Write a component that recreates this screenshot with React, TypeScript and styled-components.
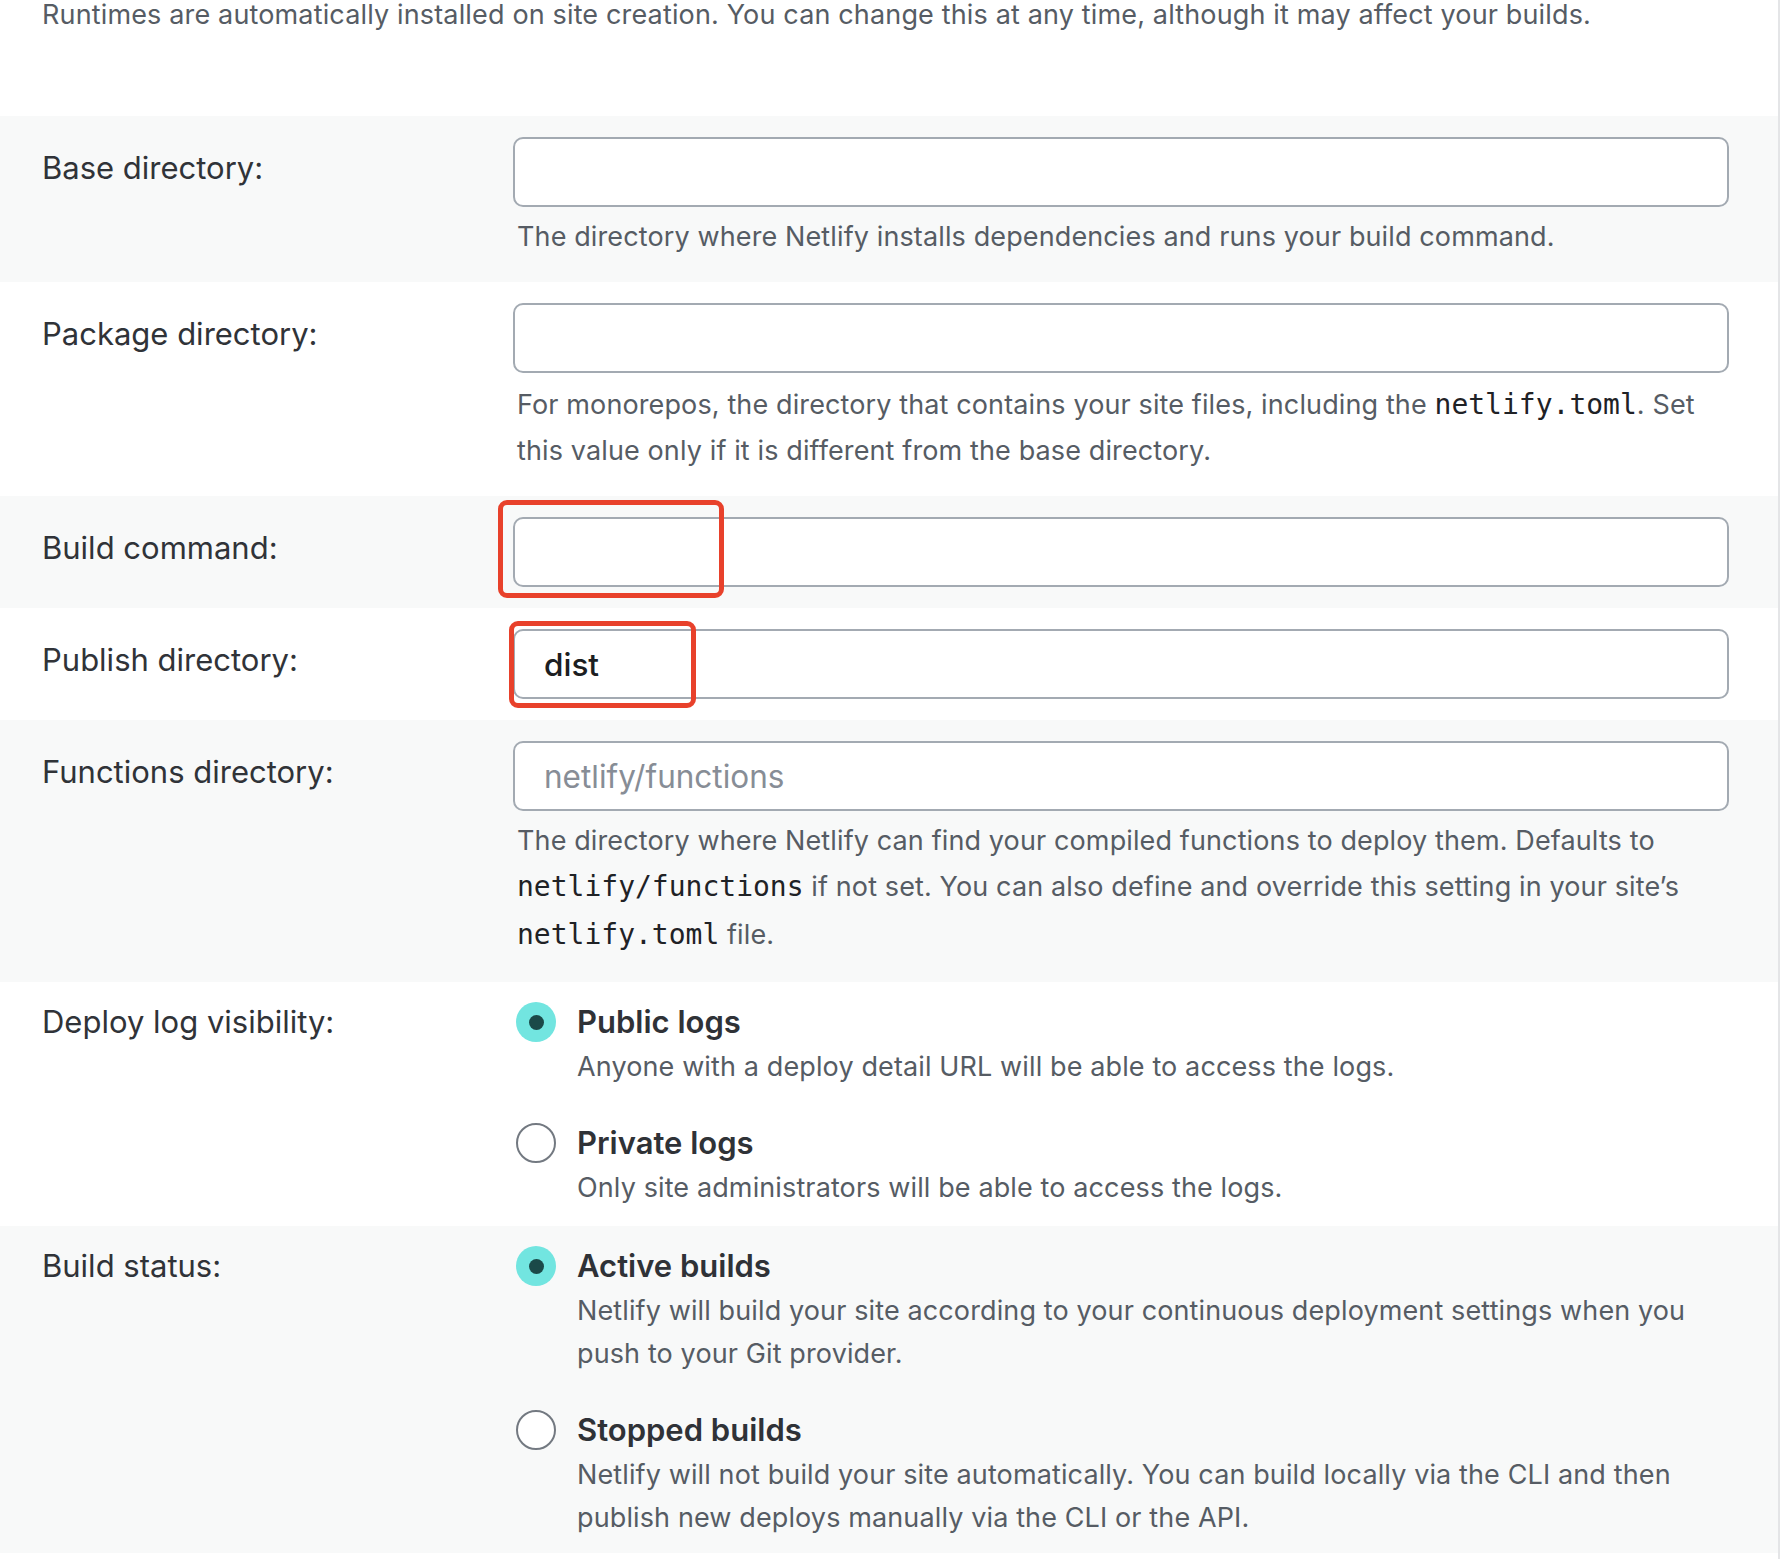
import React from 'react';
import styled, { createGlobalStyle } from 'styled-components';

const Global = createGlobalStyle`
  html, body {
    margin: 0;
    padding: 0;
    background: #ffffff;
    overflow: hidden;
  }
  body {
    font-family: Inter, "Noto Sans", sans-serif;
    -webkit-font-smoothing: antialiased;
  }
`;

const Page = styled.div`
  width: 1780px;
  min-height: 1562px;
  box-sizing: border-box;
  border-right: 2px solid #e4e5e7;
  background: #ffffff;
`;

const Intro = styled.p`
  margin: -3px 0 0;
  padding: 0 0 83px 42px;
  font-size: 27px;
  letter-spacing: 0.15px;
  line-height: 36px;
  color: #565c64;
  white-space: nowrap;
`;

const Row = styled.div<{ $shaded?: boolean; $pt?: number; $pb?: number }>`
  display: grid;
  grid-template-columns: 471px 1216px;
  padding: ${(p) => p.$pt ?? 21}px 49px ${(p) => p.$pb ?? 21}px 42px;
  background: ${(p) => (p.$shaded ? '#f8f9f9' : '#ffffff')};
`;

const Label = styled.div<{ $lh: number }>`
  font-size: 31px;
  line-height: ${(p) => p.$lh}px;
  color: #303338;
  white-space: nowrap;
`;

const Control = styled.div`
  display: flex;
  flex-direction: column;
  min-width: 0;
`;

const InputWrap = styled.div`
  position: relative;
`;

const TextInput = styled.input`
  display: block;
  box-sizing: border-box;
  width: 100%;
  height: 70px;
  margin: 0;
  padding: 0 29px;
  border: 2px solid #a3aab2;
  border-radius: 10px;
  background: #ffffff;
  font-family: Inter, "Noto Sans", sans-serif;
  font-size: 31.5px;
  font-weight: 500;
  color: #1c1e22;
  outline: none;

  &::placeholder {
    color: #878d96;
    font-weight: 400;
  }
`;

const Annotation = styled.div<{ $left: number; $top: number; $w: number; $h: number }>`
  position: absolute;
  left: ${(p) => p.$left}px;
  top: ${(p) => p.$top}px;
  width: ${(p) => p.$w}px;
  height: ${(p) => p.$h}px;
  box-sizing: border-box;
  border: 5px solid #e8412b;
  border-radius: 9px;
  pointer-events: none;
`;

const Help = styled.p`
  margin: 8px 0 0;
  padding-left: 4px;
  font-size: 27px;
  letter-spacing: 0.12px;
  line-height: 44px;
  color: #565c64;
  white-space: nowrap;
`;

const Code = styled.code`
  font-family: "DejaVu Sans Mono", "Liberation Mono", monospace;
  font-size: 28px;
  letter-spacing: 0;
  line-height: 48px;
  color: #1f2226;
`;

const Options = styled.div<{ $gap: number }>`
  display: flex;
  flex-direction: column;
  gap: ${(p) => p.$gap}px;
  padding-left: 3px;
`;

const Option = styled.div`
  display: grid;
  grid-template-columns: 40px 1fr;
  column-gap: 21px;
  align-items: start;
`;

const Radio = styled.span<{ $checked?: boolean }>`
  display: flex;
  align-items: center;
  justify-content: center;
  width: 40px;
  height: 40px;
  box-sizing: border-box;
  border-radius: 50%;
  background: ${(p) => (p.$checked ? '#72e5e0' : '#ffffff')};
  border: ${(p) => (p.$checked ? 'none' : '2px solid #737981')};

  &::after {
    content: '';
    display: ${(p) => (p.$checked ? 'block' : 'none')};
    width: 15px;
    height: 15px;
    border-radius: 50%;
    background: #1b4948;
  }
`;

const OptionTitle = styled.div`
  font-size: 31px;
  font-weight: 600;
  line-height: 40px;
  color: #2f3237;
`;

const OptionDesc = styled.div`
  grid-column: 2;
  margin-top: 3px;
  font-size: 27px;
  letter-spacing: 0.12px;
  line-height: 43px;
  color: #565c64;
  white-space: nowrap;
`;

type Opt = { title: string; desc: React.ReactNode; checked?: boolean };

const RadioGroup = ({ options, gap }: { options: Opt[]; gap: number }) => (
  <Options $gap={gap}>
    {options.map((o) => (
      <Option key={o.title}>
        <Radio $checked={o.checked} />
        <OptionTitle>{o.title}</OptionTitle>
        <OptionDesc>{o.desc}</OptionDesc>
      </Option>
    ))}
  </Options>
);

export default function App() {
  return (
    <>
      <Global />
      <Page>
        <Intro>
          Runtimes are automatically installed on site creation. You can change this at any time, although it may affect your builds.
        </Intro>

        <Row $shaded $pb={23}>
          <Label $lh={62}>Base directory:</Label>
          <Control>
            <InputWrap>
              <TextInput type="text" />
            </InputWrap>
            <Help>The directory where Netlify installs dependencies and runs your build command.</Help>
          </Control>
        </Row>

        <Row $pb={23}>
          <Label $lh={62}>Package directory:</Label>
          <Control>
            <InputWrap>
              <TextInput type="text" />
            </InputWrap>
            <Help>
              For monorepos, the directory that contains your site files, including the <Code>netlify.toml</Code>. Set
              <br />
              this value only if it is different from the base directory.
            </Help>
          </Control>
        </Row>

        <Row $shaded>
          <Label $lh={62}>Build command:</Label>
          <Control>
            <InputWrap>
              <TextInput type="text" />
              <Annotation $left={-15} $top={-17} $w={226} $h={98} />
            </InputWrap>
          </Control>
        </Row>

        <Row>
          <Label $lh={62}>Publish directory:</Label>
          <Control>
            <InputWrap>
              <TextInput type="text" defaultValue="dist" />
              <Annotation $left={-4} $top={-8} $w={187} $h={87} />
            </InputWrap>
          </Control>
        </Row>

        <Row $shaded $pb={23}>
          <Label $lh={62}>Functions directory:</Label>
          <Control>
            <InputWrap>
              <TextInput type="text" placeholder="netlify/functions" />
            </InputWrap>
            <Help>
              The directory where Netlify can find your compiled functions to deploy them. Defaults to
              <br />
              <Code>netlify/functions</Code> if not set. You can also define and override this setting in your site’s
              <br />
              <Code>netlify.toml</Code> file.
            </Help>
          </Control>
        </Row>

        <Row $pt={20} $pb={17}>
          <Label $lh={40}>Deploy log visibility:</Label>
          <Control>
            <RadioGroup
              gap={35}
              options={[
                {
                  title: 'Public logs',
                  checked: true,
                  desc: 'Anyone with a deploy detail URL will be able to access the logs.',
                },
                {
                  title: 'Private logs',
                  desc: 'Only site administrators will be able to access the logs.',
                },
              ]}
            />
          </Control>
        </Row>

        <Row $shaded $pt={20} $pb={14}>
          <Label $lh={40}>Build status:</Label>
          <Control>
            <RadioGroup
              gap={35}
              options={[
                {
                  title: 'Active builds',
                  checked: true,
                  desc: (
                    <>
                      Netlify will build your site according to your continuous deployment settings when you
                      <br />
                      push to your Git provider.
                    </>
                  ),
                },
                {
                  title: 'Stopped builds',
                  desc: (
                    <>
                      Netlify will not build your site automatically. You can build locally via the CLI and then
                      <br />
                      publish new deploys manually via the CLI or the API.
                    </>
                  ),
                },
              ]}
            />
          </Control>
        </Row>
      </Page>
    </>
  );
}
